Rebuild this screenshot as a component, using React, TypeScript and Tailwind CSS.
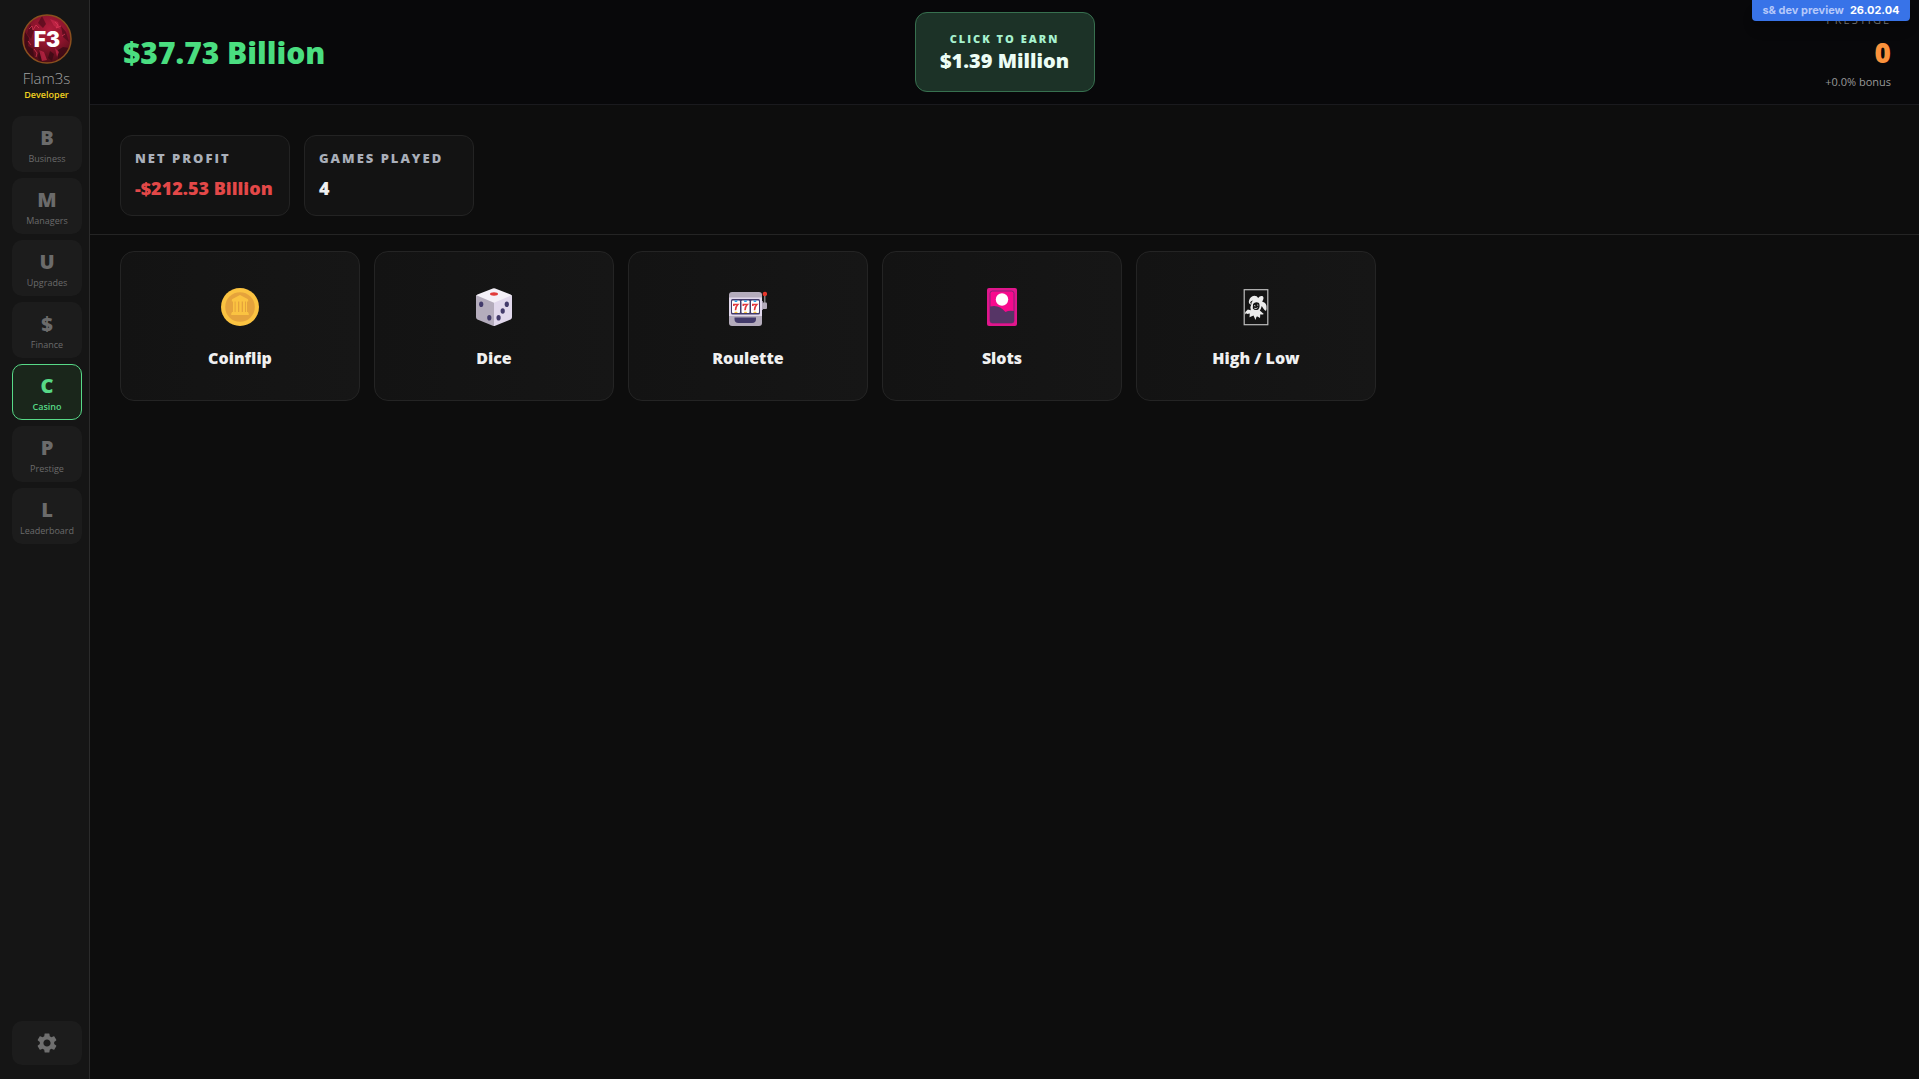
import type { ReactNode } from "react";
import { MdSettings } from "react-icons/md";

const navItems = [
  { letter: "B", label: "Business" },
  { letter: "M", label: "Managers" },
  { letter: "U", label: "Upgrades" },
  { letter: "$", label: "Finance" },
  { letter: "C", label: "Casino", active: true },
  { letter: "P", label: "Prestige" },
  { letter: "L", label: "Leaderboard" },
];

function CoinIcon() {
  return (
    <svg viewBox="0 0 38 38" className="size-[38px]" aria-hidden="true">
      <circle cx="19" cy="19" r="19" fill="#fbc341" />
      <circle cx="19" cy="19" r="14.8" fill="#e5a33c" />
      <path
        fill="#fbc341"
        d="M19 7 26.6 11q.6.4.6 1v1.400h-1.200V24h1.200v1.200h.6v1.800H10.200v-1.800h.6V24H12V13.400h-1.200V12q0-.6.6-1z"
      />
      <path fill="#e5a33c" d="M13.600 13.400h1v10.600h-1zM17 13.400h1.300v10.600h-1.300zM20.700 13.400h1.300v10.600h-1.300zM24 13.400h1v10.600h-1z" />
    </svg>
  );
}

function DiceIcon() {
  return (
    <svg viewBox="0 0 38 38" className="size-[38px]" aria-hidden="true">
      <path fill="#f4f0f8" d="M17.800.5q1.200-.6 2.400 0L35.600 6.600Q37 7.300 37 8.500L19 16 1 8.500Q1 7.300 2.400 6.600z" />
      <path fill="#b4acbc" d="M1.300 7.200 19 14.800V38q-.6 0-1.200-.300L2.400 31.400Q1 30.800 1 29.200V8.400z" />
      <path fill="#e1d8ec" d="M36.700 7.200 19 14.800V38q.6 0 1.200-.300l15.400-6.300Q37 30.800 37 29.200V8.400z" />
      <ellipse cx="19" cy="6" rx="4" ry="1.700" fill="#e13b3b" />
      <g fill="#433b6b">
        <ellipse cx="6.200" cy="16.200" rx="2.100" ry="2.800" />
        <ellipse cx="14.300" cy="29.700" rx="2.100" ry="2.800" />
        <ellipse cx="31.800" cy="16.200" rx="2.100" ry="2.800" />
        <ellipse cx="27.700" cy="23" rx="2.100" ry="2.800" />
        <ellipse cx="23.600" cy="29.700" rx="2.100" ry="2.800" />
      </g>
    </svg>
  );
}

function SlotMachineIcon() {
  return (
    <svg viewBox="0 0 38 38" className="size-[38px]" aria-hidden="true">
      <path fill="#9b9b9b" d="M35.200 5h1.200v12h-1.200z" />
      <circle cx="35.900" cy="6" r="2.200" fill="#e8372c" />
      <path fill="#998ea4" d="M31 13h3v9h-3z" />
      <rect x="33" y="14.500" width="5" height="6.500" rx="1" fill="#b4acbc" />
      <rect x="0" y="4" width="33" height="34" rx="3" fill="#b4acbc" />
      <path fill="#e1d8ec" d="M0 9.500h33V28H0z" />
      <rect x="2" y="11" width="29" height="15.500" rx="1.500" fill="#433b6b" />
      {[3, 12.500, 22].map((x) => (
        <g key={x}>
          <rect x={x} y="12.500" width="8" height="12.500" rx=".8" fill="#fff" />
          <path fill="#26a0ea" d={`M${x + 2.200} 12.500h3.500l-.7 1.400h-2.100z`} />
          <path fill="#f9c23c" d={`M${x + 2.200} 25h3.500l-.7-1.300h-2.100z`} />
          <path
            fill="none"
            stroke="#e0393e"
            strokeWidth="1.600"
            d={`M${x + 1.800} 18v-1.500h4q-2.300 2.300-2.300 5.700`}
          />
        </g>
      ))}
      <path fill="#433b6b" d="M5.500 29.500h21.500v1.500q0 4-4 4H9.500q-4 0-4-4z" />
    </svg>
  );
}

function FlowerCardIcon() {
  return (
    <svg viewBox="0 0 38 38" className="size-[38px]" aria-hidden="true">
      <rect x="4" y="0" width="30" height="38" rx="2" fill="#e0168c" />
      <rect x="7" y="3" width="24" height="32" rx="2.500" fill="#f70a8d" stroke="#8b1f76" strokeWidth="1" />
      <path fill="#563566" d="M7 18.500q9-2.500 15.500 5.500Q26 22 31 23v9.500q0 2.500-2.500 2.500h-19Q7 35 7 32.500z" />
      <circle cx="19" cy="11.500" r="6.200" fill="#fff" />
    </svg>
  );
}

function JokerIcon() {
  return (
    <svg viewBox="0 0 38 38" className="size-[38px]" aria-hidden="true">
      <rect x="7.200" y="1.700" width="23.600" height="35" fill="none" stroke="#bdbdbd" strokeWidth="1.200" />
      <path
        fill="#ededed"
        d="M13.500 16.500Q11 15 12.200 12q1-3.500 5-4.200 3 0 4 2.200 1.500-2.500 4-2 2 1 1 3.500l-1 2.200q3.500.5 4.300 4.300.4 3-.5 5-1.500-.5-3-3l-1.200-2q-.8 3-2 4.500l4 3.500q-1.800 1-3.500.3l-.3 3.700-2.500-1.500-1 .2-1 3.300-2-4.500-4 1.700.3-3.700-3 .5q0-1.500-1.800.5.2-3.500 2.800-5l3 .7q-1.300-3.200.7-6z"
      />
      <path fill="#151515" d="M13 15q.5-2.500 3-2.500-2 1.500-1.500 3.500zM16 16q2.500-3 6-1 1.500 3.500-.7 6.500-3.300 1.500-5.500-1z" />
      <path fill="none" stroke="#ededed" strokeWidth=".8" d="m17 17.500 1.500.5m1.500-1 1.300.2M17.300 20.300q2 1 3.300-.7" />
    </svg>
  );
}

const games: { name: string; icon: ReactNode }[] = [
  { name: "Coinflip", icon: <CoinIcon /> },
  { name: "Dice", icon: <DiceIcon /> },
  { name: "Roulette", icon: <SlotMachineIcon /> },
  { name: "Slots", icon: <FlowerCardIcon /> },
  { name: "High / Low", icon: <JokerIcon /> },
];

function Avatar() {
  return (
    <svg viewBox="0 0 50 50" className="size-[50px]" role="img" aria-label="Flam3s">
      <defs>
        <radialGradient id="glow" cx="55%" cy="30%" r="70%">
          <stop offset="0" stopColor="#b01c3c" />
          <stop offset=".5" stopColor="#8c142c" />
          <stop offset="1" stopColor="#4a0c16" />
        </radialGradient>
        <clipPath id="disc">
          <circle cx="25" cy="25" r="24" />
        </clipPath>
      </defs>
      <g clipPath="url(#disc)">
        <circle cx="25" cy="25" r="24" fill="url(#glow)" />
        <path fill="#3a0a14" d="M3 18l4 6-1 8 5 3 1 8-9-5zM17 35l3 4-1 9-3-4zM36 36l5-3 6 1-6 10-5 4zM28 37l4 3-2 7-4-3z" opacity=".8" />
        <path fill="#4d0a1a" d="M8 10l4 6-3 9-4-5zM39 12l5 6 3 10-6-5zM20 2l4 8-3 4-5-5z" opacity=".7" />
        <path fill="#c8284a" d="M28 5l8 3 2 7-6-3zM17 36l5 2 3 8-5 1zM33 34l4 4-2 5z" opacity=".7" />
        <path fill="none" stroke="#e03b5a" strokeWidth="1" opacity=".7" d="M7 15l3-3 1 4 3-5 3 3M33 8l3 3-2 3 5-2M12 35l3 4-1 4M43 20l-3 2M6 27l3 4" />
      </g>
      <circle cx="25" cy="25" r="24" fill="none" stroke="#8a4f1e" strokeWidth="1.500" />
      <text x="25" y="33" textAnchor="middle" className="fill-white font-[Inter] text-[21px] font-black">
        F3
      </text>
    </svg>
  );
}

function Stat({ label, value, tone }: { label: string; value: string; tone: string }) {
  return (
    <div className="flex h-[81px] min-w-[170px] flex-col rounded-xl border border-[#232323] bg-[#131313] px-[14px] pt-3">
      <span className="text-[13px] leading-5 font-extrabold tracking-[2px] text-[#a9afb9]">{label}</span>
      <span className={`mt-2 text-[18px] leading-6 font-extrabold ${tone}`}>{value}</span>
    </div>
  );
}

export default function App() {
  return (
    <div className="flex min-h-screen bg-[#0d0d0d] font-['Open_Sans',sans-serif] text-[#f0f0f0]">
      <aside className="flex w-[90px] shrink-0 flex-col border-r border-[#2b2b2b] bg-[#151515] pt-[14px] pr-[7px] pb-[14px] pl-3">
        <div className="flex flex-col items-center pr-px">
          <Avatar />
          <span className="mt-1 text-[15px] leading-5 font-light text-[#a3a3a3]">Flam3s</span>
          <span className="text-[9px] leading-[14px] font-semibold text-[#f2d21f]">Developer</span>
        </div>
        <nav className="mt-[14px] flex flex-col gap-[6px]">
          {navItems.map((item) => (
            <button
              key={item.label}
              type="button"
              className={
                item.active
                  ? "flex h-14 flex-col items-center rounded-[10px] border border-[#57d987] bg-[#1a261b] pt-[9px] text-[#57d987]"
                  : "flex h-14 flex-col items-center rounded-[10px] border border-transparent bg-[#1c1c1c] pt-[9px] text-[#6b6b6b]"
              }
            >
              <span className="text-[20px] leading-6 font-extrabold">{item.letter}</span>
              <span className={item.active ? "text-[9px] leading-[18px] font-semibold" : "text-[9px] leading-[18px] font-medium"}>
                {item.label}
              </span>
            </button>
          ))}
        </nav>
        <button
          type="button"
          aria-label="Settings"
          className="mt-auto flex h-11 items-center justify-center rounded-[10px] bg-[#1c1c1c] text-[#6f6f6f]"
        >
          <MdSettings className="size-6" />
        </button>
      </aside>

      <div className="flex min-w-0 flex-1 flex-col">
        <header className="relative grid h-[105px] grid-cols-[1fr_auto_1fr] items-center border-b border-[#1a1a1e] bg-[#08080a] px-7">
          <div className="pt-[2px] pl-[5px] text-[30px] leading-10 font-extrabold text-[#4ade80]">$37.73 Billion</div>
          <button
            type="button"
            className="flex h-20 w-[180px] flex-col items-center justify-center rounded-xl border border-[#37704f] bg-[#1c3227] pt-[2px]"
          >
            <span className="text-[11px] leading-4 font-extrabold tracking-[2px] text-[#a7f3d0]">CLICK TO EARN</span>
            <span className="text-[20px] leading-7 font-extrabold text-[#ecfdf5]">$1.39 Million</span>
          </button>
          <div className="flex flex-col items-end self-start pt-3">
            <span className="text-[11px] leading-4 tracking-[2px] text-[#777]">PRESTIGE</span>
            <span className="mt-2 text-[28px] leading-8 font-extrabold text-[#fb923c]">0</span>
            <span className="mt-[6px] text-[11px] leading-4 text-[#999]">+0.0% bonus</span>
          </div>
          <div className="absolute top-0 right-[9px] flex h-[21px] w-[158px] items-center justify-center gap-[6px] rounded-b bg-[#3873e8] font-[Inter] text-[11px] font-bold shadow-lg">
            <span className="text-[#b5c8fa]">s&amp; dev preview</span>
            <span className="text-white">26.02.04</span>
          </div>
        </header>

        <section className="flex gap-[14px] border-b border-[#242424] px-[30px] pt-[30px] pb-[18px]">
          <Stat label="NET PROFIT" value="-$212.53 Billion" tone="text-[#e34848]" />
          <Stat label="GAMES PLAYED" value="4" tone="text-[#f0f0f0]" />
        </section>

        <main className="flex flex-wrap gap-[14px] px-[30px] pt-4">
          {games.map((game) => (
            <button
              key={game.name}
              type="button"
              className="flex h-[150px] w-[240px] flex-col items-center rounded-[14px] border border-[#242424] bg-linear-to-r from-[#131313] to-[#161616] pt-9"
            >
              {game.icon}
              <span className="mt-5 text-[16px] leading-6 font-extrabold">{game.name}</span>
            </button>
          ))}
        </main>
      </div>
    </div>
  );
}
